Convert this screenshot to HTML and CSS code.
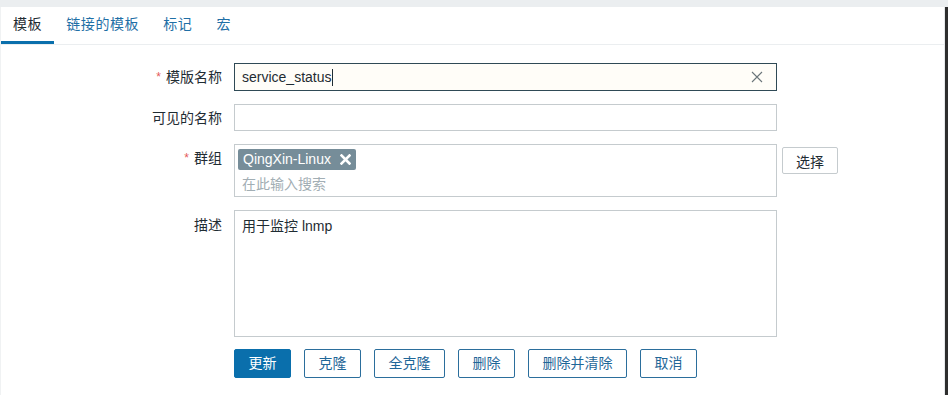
FILE: index.html
```html
<!DOCTYPE html>
<html lang="zh-CN">
<head>
<meta charset="utf-8">
<title>模板</title>
<link rel="stylesheet" href="styles.css">
</head>
<body>
<div class="page">
  <div class="topstrip"></div>
  <div class="main">
    <div class="card">
      <nav class="tabs">
        <a class="tab active">模板</a>
        <a class="tab">链接的模板</a>
        <a class="tab">标记</a>
        <a class="tab">宏</a>
      </nav>
      <form class="form">
        <label class="lbl lbl-mid"><span class="req">*</span>模版名称</label>
        <div class="field">
          <div class="input focused">
            <span class="val">service_status</span><span class="caret"></span>
            <svg class="clear" width="12" height="12" viewBox="0 0 12 12"><path d="M1 1L11 11M11 1L1 11" stroke="#6b757a" stroke-width="1.1" fill="none"/></svg>
          </div>
        </div>

        <label class="lbl lbl-mid">可见的名称</label>
        <div class="field">
          <div class="input short"></div>
        </div>

        <label class="lbl lbl-top1"><span class="req">*</span>群组</label>
        <div class="field field-row">
          <div class="multi">
            <span class="tag">QingXin-Linux<svg class="tagx" width="11" height="11" viewBox="0 0 11 11"><path d="M1.5 1.5L9.5 9.5M9.5 1.5L1.5 9.5" stroke="#ffffff" stroke-width="2.6" stroke-linecap="square" fill="none"/></svg></span>
            <div class="ph">在此输入搜索</div>
          </div>
          <button type="button" class="btn-grey">选择</button>
        </div>

        <label class="lbl lbl-top2">描述</label>
        <div class="field">
          <div class="textarea">用于监控 lnmp</div>
        </div>

        <div></div>
        <div class="buttons">
          <button type="button" class="btn primary">更新</button>
          <button type="button" class="btn">克隆</button>
          <button type="button" class="btn">全克隆</button>
          <button type="button" class="btn">删除</button>
          <button type="button" class="btn">删除并清除</button>
          <button type="button" class="btn">取消</button>
        </div>
      </form>
    </div>
    <div class="darkedge"></div>
  </div>
</div>
</body>
</html>
```

FILE: styles.css
```css
* { box-sizing: border-box; }
html, body {
  margin: 0;
  padding: 0;
  background: #ffffff;
}
body {
  font-family: "Liberation Sans", Arial, "Noto Sans CJK SC", sans-serif;
  font-size: 14px;
  color: #1f2c33;
}
.page {
  width: 948px;
  height: 395px;
  overflow: hidden;
  display: flex;
  flex-direction: column;
}
.topstrip {
  height: 7px;
  background: #ebeef0;
  flex: none;
}
.main {
  flex: 1;
  display: flex;
}
.card {
  width: 945px;
  border-left: 1px solid #f0f2f3;
  border-right: 1px solid #e6e9eb;
  background: #ffffff;
}
.darkedge {
  flex: 1;
  background: #2e2e2e;
}
.tabs {
  display: flex;
  height: 38px;
  border-bottom: 1px solid #ebeef0;
}
.tab {
  display: block;
  padding: 0 12px;
  height: 37px;
  line-height: 35px;
  color: #1f6fa6;
  letter-spacing: 0.6px;
  border-bottom: 3px solid transparent;
  cursor: pointer;
}
.tab.active {
  color: #1f2c33;
  border-bottom-color: #0a6fac;
}
.form {
  display: grid;
  grid-template-columns: 221px 1fr;
  column-gap: 12px;
  row-gap: 13px;
  padding-top: 18px;
}
.lbl {
  text-align: right;
  color: #1f2c33;
  line-height: 18px;
}
.lbl-mid { align-self: center; }
.lbl-top1 { padding-top: 5px; }
.lbl-top2 { padding-top: 6px; }
.req {
  color: #e45959;
  font-size: 12px;
  margin-right: 5px;
  position: relative;
  top: -1px;
}
.field-row {
  display: flex;
  align-items: flex-start;
}
.input {
  position: relative;
  width: 543px;
  height: 28px;
  border: 1px solid #c5cbce;
  background: #ffffff;
  padding: 0 7px;
  line-height: 26px;
  display: flex;
  align-items: center;
}
.input.short { height: 27px; }
.input.focused {
  border-color: #2f4a56;
  background: #fffdf8;
}
.val { color: #1f2c33; }
.caret {
  display: inline-block;
  width: 1px;
  height: 17px;
  background: #1f2c33;
  margin-left: 1px;
}
.clear {
  position: absolute;
  right: 13px;
  top: 7px;
}
.multi {
  width: 543px;
  height: 53px;
  border: 1px solid #c5cbce;
  padding: 4px 3px 0;
}
.tag {
  display: inline-flex;
  align-items: center;
  height: 21px;
  padding: 0 5px 0 5px;
  background: #768d99;
  color: #ffffff;
  border-radius: 2px;
  line-height: 21px;
}
.tagx {
  margin-left: 9px;
}
.ph {
  color: #a2aeb4;
  padding-left: 4px;
  line-height: 18px;
  margin-top: 5px;
}
.btn-grey {
  margin-left: 5px;
  margin-top: 3px;
  width: 56px;
  height: 27px;
  border: 1px solid #c5cbce;
  border-radius: 2px;
  background: #ffffff;
  font-family: inherit;
  font-size: 14px;
  color: #1f2c33;
  padding: 0;
}
.textarea {
  width: 543px;
  height: 127px;
  border: 1px solid #c5cbce;
  padding: 6px 7px;
  line-height: 18px;
}
.buttons {
  display: flex;
  column-gap: 13px;
  margin-top: -1px;
}
.btn {
  height: 29px;
  padding: 0 13.5px;
  border: 1px solid #2b6e9c;
  border-radius: 2px;
  background: #ffffff;
  color: #1f6798;
  font-family: inherit;
  font-size: 14px;
  line-height: 27px;
}
.btn.primary {
  background: #0a6fac;
  border-color: #0a6fac;
  color: #ffffff;
}
```
